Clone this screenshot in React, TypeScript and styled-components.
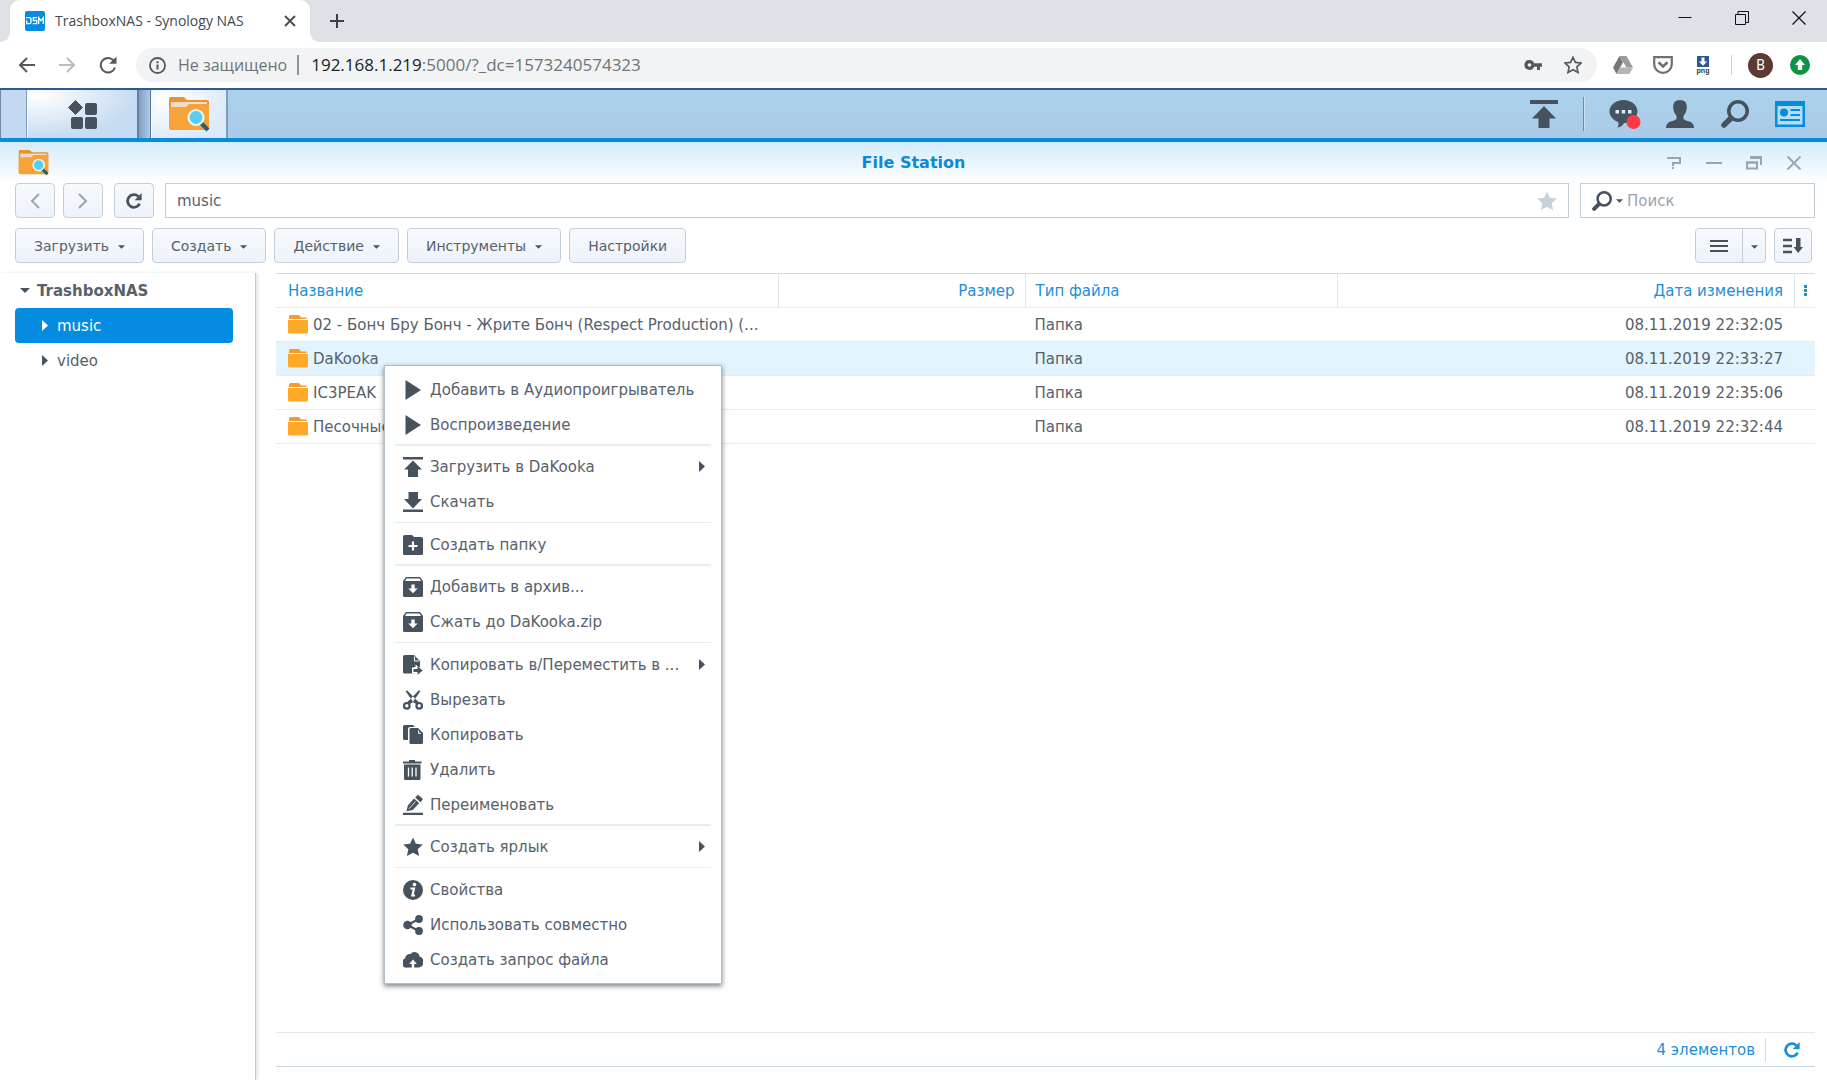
import React from "react";
import styled, { createGlobalStyle, css } from "styled-components";

const GlobalStyle = createGlobalStyle`
  *, *::before, *::after { box-sizing: border-box; }
  html, body, #root { height: 100%; margin: 0; }
  body { background: #fff; font: 15px/20px "DejaVu Sans", sans-serif; color: #57616b; overflow: hidden; }
  button, input { font: inherit; color: inherit; margin: 0; }
  button { padding: 0; border: 0; background: none; display: flex; align-items: center; justify-content: center; cursor: default; }
  svg { display: block; flex: none; }
  ul { margin: 0; padding: 0; list-style: none; }
`;

const ink = "#46535e";
const blue = "#058be0";
const azure = "#1c8fd8";
const grey = "#9aa5ae";

const Page = styled.div`
  display: flex;
  flex-direction: column;
  height: 100%;
`;

/* ---------- browser chrome ---------- */
const TabStrip = styled.header`
  display: flex;
  align-items: stretch;
  height: 42px;
  flex: none;
  padding-left: 10px;
  background: #dee1e6;
  font: 14px/20px "Open Sans", sans-serif;
  color: #45494d;
`;
const Tab = styled.div`
  position: relative;
  display: flex;
  align-items: center;
  gap: 10px;
  width: 300px;
  padding: 0 13px 0 15px;
  border-radius: 10px 10px 0 0;
  background: #fff;
  &::before, &::after {
    content: "";
    position: absolute;
    bottom: 0;
    width: 10px;
    height: 10px;
  }
  &::before { left: -10px; background: radial-gradient(circle at 0 0, transparent 10px, #fff 10px); }
  &::after { right: -10px; background: radial-gradient(circle at 100% 0, transparent 10px, #fff 10px); }
`;
const TabTitle = styled.span`
  flex: 1;
  white-space: nowrap;
`;
const IconButton = styled.button<{ $w?: number }>`
  width: ${(p) => (p.$w ? `${p.$w}px` : "auto")};
  flex: none;
`;
const WindowControls = styled.div`
  display: flex;
  margin-left: auto;
  height: 36px;
`;
const AddressRow = styled.div`
  display: flex;
  align-items: center;
  height: 46px;
  flex: none;
  padding: 0 17px 0 7px;
  background: #fff;
  font: 16px/22px "Open Sans", sans-serif;
`;
const AddressBar = styled.form`
  flex: 1;
  display: flex;
  align-items: center;
  height: 34px;
  margin-left: 8px;
  padding: 0 4px 0 13px;
  border-radius: 17px;
  background: #f1f3f4;
  color: #6f7378;
`;
const Security = styled.span`
  margin-left: 12px;
  padding-right: 10px;
  border-right: 2px solid #8f9499;
  line-height: 20px;
`;
const Url = styled.p`
  flex: 1;
  margin: 0 0 0 12px;
  font-size: 17px;
  b { font-weight: 400; color: #202124; }
`;
const Extensions = styled.div`
  display: flex;
  align-items: center;
  margin-left: 6px;
`;
const Avatar = styled.button`
  width: 25px;
  height: 25px;
  margin: 0 17px 0 16px;
  border-radius: 50%;
  background: #5b3a34;
  color: #fff;
  font: 14px/25px Roboto, sans-serif;
`;
const ThinRule = styled.i`
  width: 1px;
  height: 20px;
  margin-left: 8px;
  background: #cfd2d6;
`;

/* ---------- desktop taskbar ---------- */
const Taskbar = styled.nav`
  display: flex;
  height: 54px;
  flex: none;
  border-top: 2px solid #2f5b8c;
  border-bottom: 4px solid ${blue};
  background: linear-gradient(#abd1ec, #aacbe8);
`;
const TaskEdge = styled.i`
  width: 27px;
  border-left: 1px solid #6f8ba8;
  border-right: 1px solid #7f9dbb;
  background: #c4d9ef;
`;
const TaskButton = styled.button<{ $w: number; $light?: boolean }>`
  width: ${(p) => p.$w}px;
  border-left: 1px solid #f2f7fc;
  border-right: 2px solid ${(p) => (p.$light ? "#7f9dbb" : "#65809c")};
  background: ${(p) =>
    p.$light
      ? "radial-gradient(ellipse at 20% 20%, #fff, #dceafa 75%)"
      : "radial-gradient(ellipse at 8% 10%, #fff, #c6dcf2 70%)"};
`;
const TaskShade = styled.i`
  width: 12px;
  border-right: 1px solid #5f7b98;
  background: linear-gradient(90deg, #7f9fc0, #aecbe8);
`;
const Tray = styled.div`
  display: flex;
  align-items: center;
  margin-left: auto;
  padding-right: 3px;
`;
const TraySplit = styled.i`
  width: 2px;
  height: 34px;
  margin: 0 19px 0 20px;
  border-left: 1px solid #6b8cad;
  border-right: 1px solid #cbe1f4;
`;

/* ---------- File Station window ---------- */
const WindowBar = styled.header`
  display: grid;
  grid-template-columns: 1fr auto 1fr;
  align-items: center;
  height: 41px;
  flex: none;
  padding: 0 13px;
  background: linear-gradient(#d3ecfb, #fff);
  > svg { margin-left: 5px; }
  h1 { margin: 0; font-size: 16px; font-weight: 700; line-height: 20px; color: #0f88d6; }
`;
const WindowActions = styled.div`
  display: flex;
  justify-content: flex-end;
`;
const Toolbar = styled.div<{ $gap: number; $right: number }>`
  display: flex;
  gap: ${(p) => p.$gap}px;
  height: 35px;
  flex: none;
  margin: 0 ${(p) => p.$right}px 10px 15px;
`;
const History = styled.div`
  display: flex;
  gap: 8px;
`;
const face = css`
  border: 1px solid #c3ced9;
  border-radius: 4px;
  background: linear-gradient(#f7fafe, #edf3fb);
`;
const ToolButton = styled.button<{ $w?: number }>`
  ${face}
  ${(p) => (p.$w ? `width: ${p.$w}px;` : "padding: 0 18px;")}
  gap: 9px;
  flex: none;
  font-size: 14px;
  white-space: nowrap;
`;
const Field = styled.label<{ $w?: number }>`
  display: flex;
  align-items: center;
  gap: 4px;
  ${(p) => (p.$w ? `width: ${p.$w}px;` : "flex: 1;")}
  min-width: 0;
  padding: 0 11px;
  border: 1px solid #c3ced9;
  background: #fff;
  input {
    flex: 1;
    min-width: 0;
    padding: 0;
    border: 0;
    outline: 0;
    background: none;
  }
  input::placeholder { color: #98a3ad; opacity: 1; }
`;
const Segmented = styled.div`
  ${face}
  display: flex;
  margin-left: auto;
  button + button { border-left: 1px solid #c3ced9; }
`;
const Body = styled.main`
  display: flex;
  flex: 1;
  min-height: 0;
`;
const Sidebar = styled.aside`
  width: 256px;
  flex: none;
  padding: 0 22px 0 15px;
  border-right: 1px solid #c4cbd1;
  box-shadow: 2px 0 3px #e4e7ea;
`;
const TreeNode = styled.button<{ $root?: boolean; $active?: boolean }>`
  width: 100%;
  height: 35px;
  justify-content: flex-start;
  gap: ${(p) => (p.$root ? 7 : 9)}px;
  padding-left: ${(p) => (p.$root ? 5 : 27)}px;
  border-radius: 4px;
  font-weight: ${(p) => (p.$root ? 700 : 400)};
  background: ${(p) => (p.$active ? blue : "none")};
  color: ${(p) => (p.$active ? "#fff" : "inherit")};
`;
const Content = styled.section`
  display: flex;
  flex-direction: column;
  flex: 1;
  min-width: 0;
  margin: 0 12px 13px 20px;
`;
const Files = styled.table`
  width: 100%;
  table-layout: fixed;
  border-collapse: separate;
  border-spacing: 0;
  border-top: 1px solid #c9dcea;
  th, td {
    height: 34px;
    padding: 0 10px;
    border-bottom: 1px solid #e6ebef;
    overflow: hidden;
    white-space: nowrap;
    text-overflow: ellipsis;
    text-align: left;
    font-weight: 400;
  }
  th { color: ${azure}; }
  th:first-child, td:first-child { padding-left: 12px; }
  th + th { border-left: 1px solid #dce6ee; }
  th:nth-child(2), th:nth-child(4), td:nth-child(4) { text-align: right; }
  th:nth-child(4), td:nth-child(4) { padding-right: 11px; }
  th:last-child { padding: 0; }
`;
const Column = styled.col<{ $w?: string }>`
  width: ${(p) => p.$w ?? "auto"};
`;
const Row = styled.tr<{ $selected?: boolean }>`
  background: ${(p) => (p.$selected ? "#e2f4fe" : "#fff")};
`;
const FileName = styled.span`
  display: flex;
  align-items: center;
  gap: 5px;
`;
const StatusBar = styled.footer`
  display: flex;
  align-items: center;
  justify-content: flex-end;
  height: 35px;
  margin-top: auto;
  padding-right: 15px;
  border-top: 1px solid #e2e7eb;
  border-bottom: 1px solid #c9d6df;
  color: ${azure};
  i { width: 1px; height: 24px; margin: 0 18px 0 10px; background: #d3dce3; }
`;

/* ---------- context menu ---------- */
const Menu = styled.ul`
  position: absolute;
  left: 384px;
  top: 365px;
  width: 338px;
  padding: 6px 10px;
  border: 1px solid #b3bec6;
  background: #fff;
  box-shadow: 0 2px 5px rgba(40, 55, 70, 0.65);
`;
const MenuItem = styled.button`
  width: 100%;
  height: 35px;
  justify-content: flex-start;
  gap: 7px;
  padding: 0 6px 0 8px;
  span { flex: 1; text-align: left; white-space: nowrap; }
`;
const Divider = styled.li<{ $thick?: boolean }>`
  height: ${(p) => (p.$thick ? 2 : 1)}px;
  margin: ${(p) => (p.$thick ? "2px 0 3px" : "3px 0 4px")};
  background: #e6edf1;
`;

/* ---------- drawings ---------- */
const CaretSvg = styled.svg<{ $low?: boolean }>`
  margin-top: ${(p) => (p.$low ? 3 : 0)}px;
`;
const Caret = ({ w = 7, low = false }: { w?: number; low?: boolean }) => (
  <CaretSvg $low={low} width={w} height={Math.ceil(w / 2)} viewBox="0 0 8 4"><path d="M0 0h8L4 4z" fill={ink} /></CaretSvg>
);
const Arrow = ({ c = ink }: { c?: string }) => (
  <svg width="6" height="11" viewBox="0 0 6 11"><path d="M0 0l6 5.500L0 11z" fill={c} /></svg>
);
const Reload = ({ c = ink }: { c?: string }) => (
  <svg width="16" height="16" viewBox="0 0 16 16">
    <path d="M13.600 10.600A6.300 6.300 0 1 1 12.400 3.600" fill="none" stroke={c} strokeWidth="2.800" />
    <path d="M15.600 0v7.200H8.600z" fill={c} />
  </svg>
);
const Magnifier = ({ s }: { s: number }) => (
  <svg width={s} height={s} viewBox="0 0 28 28">
    <circle cx="17" cy="11" r="9.200" fill="none" stroke={ink} strokeWidth="3.600" />
    <path d="M9.600 18.600l-6.600 6.400" stroke={ink} strokeWidth="5.600" strokeLinecap="round" />
  </svg>
);
const StationIcon = ({ w }: { w: number }) => (
  <svg width={w} height={Math.round(w * 0.86)} viewBox="0 0 42 36">
    <path d="M1 3q0-2 2-2h13l3 3h20q2 0 2 2v25H1z" fill="#e8942a" />
    <path d="M3 6h36v6H3z" fill="#f6dcc3" />
    <path d="M1 11h17l3-3h20v24q0 2-2 2H3q-2 0-2-2z" fill="#f5a33a" />
    <path d="M33 27l7 7" stroke="#2d5c62" strokeWidth="4" />
    <circle cx="28" cy="21.500" r="7.500" fill="#57cdf5" stroke="#e9f4ee" strokeWidth="2.200" />
  </svg>
);
const FolderIcon = () => (
  <svg width="20" height="19" viewBox="0 0 20 19">
    <path d="M1 1.500Q1 0 2.500 0H11l2 2.500h5.500V4H1z" fill="#f59a2b" />
    <path d="M0 5h20v12q0 1.500-1.500 1.500h-17Q0 18.500 0 17z" fill="#ffa928" />
  </svg>
);
const starPath = "M10 .5l2.900 6.300 6.900.8-5.100 4.700 1.400 6.800-6.100-3.400-6.100 3.400 1.400-6.800L.2 7.600l6.900-.8z";

const glyphs: Record<string, React.ReactNode> = {
  play: <path d="M2.500 0l15.500 10L2.500 20z" />,
  upload: <path d="M0 0h20v2.500H0zM10 3.500l9 9h-4V20H5v-7.500H1z" />,
  download: <path d="M0 17.500h20V20H0zM5.500 0h9.500v7H19l-9 9.500L1 7h4.500z" />,
  newFolder: (
    <>
      <path d="M0 1.500Q0 0 1.500 0H9l2 2h7.500Q20 2 20 3.500v15q0 1.500-1.500 1.500h-17Q0 20 0 18.500z" />
      <path d="M10 6.500v9M5.500 11h9" stroke="#fff" strokeWidth="2.200" />
    </>
  ),
  archive: (
    <>
      <path d="M3 0h14l3 4v14.500q0 1.500-1.500 1.500h-17Q0 20 0 18.500V4z" />
      <path d="M3.500 1.500h13l1.500 2.500H2z" fill="#fff" />
      <path d="M8.300 7.500h3.400v4h3L10 16.300l-4.700-4.800h3z" fill="#fff" />
    </>
  ),
  move: (
    <>
      <path d="M0 1.500Q0 0 1.500 0H11l6 6v6h-6v6.500H1.500Q0 18.500 0 17z" />
      <path d="M11.500 1.500v4.500H16" fill="none" stroke="#fff" />
      <path d="M12.500 9.500V12.500H9v6h3.500V20h3l4.500-4.500z" fill="#fff" />
      <path d="M10.500 14h4v-2.800l5.300 4.300-5.300 4.300V17h-4z" />
    </>
  ),
  cut: (
    <>
      <g fill="none" stroke={ink} strokeWidth="2.200">
        <circle cx="3.800" cy="15.800" r="2.800" />
        <circle cx="16.200" cy="15.800" r="2.800" />
      </g>
      <path d="M2.500 1Q4-.3 5 1.200L16.500 13l-2 1.800-4-2.300zM17.500 1Q16-.3 15 1.200L3.500 13l2 1.800 4-2.300z" />
    </>
  ),
  copy: (
    <>
      <path d="M0 1.500Q0 0 1.500 0H10l2 2H7Q5 2 5 4v11H1.500Q0 15 0 13.500z" />
      <path d="M6.500 4.500Q6.500 3 8 3h7l5 5v9.500q0 1.500-1.500 1.500H8q-1.500 0-1.500-1.500z" />
      <path d="M15.500 5.500v2.800H18" fill="none" stroke="#fff" />
    </>
  ),
  trash: (
    <>
      <path d="M6 0h6v1.500h6.500v2H0v-2h6zM1 4.500h16.500V18.500Q17.500 20 16 20H2.500Q1 20 1 18.500z" />
      <path d="M5.500 7.500v9M9.200 7.500v9M13 7.500v9" stroke="#fff" strokeWidth="1.300" />
    </>
  ),
  rename: (
    <>
      <path d="M0 17.800h20V20H0zM3.500 16.300l1.300-5.800L11 3.500l5.200 4.500-6.400 7zM12.200 2.500L14 .5q1-.8 2 0l3.200 2.800q.9 1 0 2l-1.800 2z" />
      <path d="M6 13.800L12.500 6.500" stroke="#fff" strokeWidth=".8" />
    </>
  ),
  star: <path d={starPath} />,
  info: (
    <>
      <circle cx="10" cy="10" r="10" />
      <circle cx="11.500" cy="4.600" r="1.800" fill="#fff" />
      <path d="M7.500 8.500h3.500l-1.600 7h2.600" fill="none" stroke="#fff" strokeWidth="2.200" />
    </>
  ),
  share: (
    <>
      <path d="M16 4L4.500 10 16 16" fill="none" stroke={ink} strokeWidth="2.200" />
      <circle cx="4.500" cy="10" r="4.300" /><circle cx="16" cy="4" r="3.900" /><circle cx="16" cy="16" r="3.900" />
    </>
  ),
  cloud: (
    <>
      <path d="M4.500 17.500A4.500 4.500 0 0 1 2 8.500 5 5 0 0 1 7.500 4a5 5 0 0 1 9 2.600 5.600 5.600 0 0 1-.5 10.900z" />
      <path d="M8.800 18v-4H6.200L10 9.500l3.800 4.500h-2.600v4z" fill="#fff" />
    </>
  ),
};
const Glyph = ({ name }: { name: string }) => (
  <svg width="20" height="20" viewBox="0 0 20 20" fill={ink}>{glyphs[name]}</svg>
);

type Entry = { icon: string; text: string; sub?: boolean };
const menuGroups: Entry[][] = [
  [{ icon: "play", text: "Добавить в Аудиопроигрыватель" }, { icon: "play", text: "Воспроизведение" }],
  [{ icon: "upload", text: "Загрузить в DaKooka", sub: true }, { icon: "download", text: "Скачать" }],
  [{ icon: "newFolder", text: "Создать папку" }],
  [{ icon: "archive", text: "Добавить в архив..." }, { icon: "archive", text: "Сжать до DaKooka.zip" }],
  [
    { icon: "move", text: "Копировать в/Переместить в ...", sub: true },
    { icon: "cut", text: "Вырезать" },
    { icon: "copy", text: "Копировать" },
    { icon: "trash", text: "Удалить" },
    { icon: "rename", text: "Переименовать" },
  ],
  [{ icon: "star", text: "Создать ярлык", sub: true }],
  [
    { icon: "info", text: "Свойства" },
    { icon: "share", text: "Использовать совместно" },
    { icon: "cloud", text: "Создать запрос файла" },
  ],
];
const files = [
  ["02 - Бонч Бру Бонч - Жрите Бонч (Respect Production) (...", "08.11.2019 22:32:05"],
  ["DaKooka", "08.11.2019 22:33:27"],
  ["IC3PEAK", "08.11.2019 22:35:06"],
  ["Песочные", "08.11.2019 22:32:44"],
];

function BrowserChrome() {
  return (
    <>
      <TabStrip>
        <Tab>
          <svg width="20" height="20" viewBox="0 0 20 20">
            <rect width="20" height="20" rx="2" fill={blue} />
            <g fill="none" stroke="#fff" strokeWidth="1.300">
              <path d="M1 6.700h3.500q1.500 0 1.500 1.500v3q0 1.500-1.500 1.500H1.700V9.500" />
              <path d="M12 6.700H8.300v2.800h3.500v3.200H7.800" />
              <path d="M13.700 13V6.700l2.300 3 2.300-3V13" />
            </g>
          </svg>
          <TabTitle>TrashboxNAS - Synology NAS</TabTitle>
          <IconButton aria-label="Закрыть вкладку">
            <svg width="14" height="14" viewBox="0 0 14 14"><path d="M2 2l10 10M12 2L2 12" stroke="#45494d" strokeWidth="1.800" /></svg>
          </IconButton>
        </Tab>
        <IconButton $w={54} aria-label="Новая вкладка">
          <svg width="16" height="16" viewBox="0 0 16 16"><path d="M8 1v14M1 8h14" stroke="#3c4043" strokeWidth="2" /></svg>
        </IconButton>
        <WindowControls>
          <IconButton $w={57} aria-label="Свернуть">
            <svg width="14" height="14" viewBox="0 0 14 14"><path d="M.5 6.500h13" stroke="#111" /></svg>
          </IconButton>
          <IconButton $w={57} aria-label="Развернуть">
            <svg width="14" height="14" viewBox="0 0 14 14" fill="none" stroke="#111"><path d="M.5 3.500h10v10H.5zM3 3V.5h10.500v11H11" /></svg>
          </IconButton>
          <IconButton $w={57} aria-label="Закрыть">
            <svg width="14" height="14" viewBox="0 0 14 14"><path d="M.5 .5l13 13M13.500 .5l-13 13" stroke="#111" strokeWidth="1.200" /></svg>
          </IconButton>
        </WindowControls>
      </TabStrip>
      <AddressRow>
        <IconButton $w={40} aria-label="Назад">
          <svg width="18" height="18" viewBox="0 0 18 18" fill="none" stroke="#55595e" strokeWidth="2"><path d="M17 9H2.500M9 2L2 9l7 7" /></svg>
        </IconButton>
        <IconButton $w={40} aria-label="Вперёд">
          <svg width="18" height="18" viewBox="0 0 18 18" fill="none" stroke="#b9bcc0" strokeWidth="2"><path d="M1 9h14.500M9 2l7 7-7 7" /></svg>
        </IconButton>
        <IconButton $w={41} aria-label="Обновить страницу">
          <svg width="18" height="18" viewBox="0 0 18 18"><path d="M16 11.500A7.300 7.300 0 1 1 14.500 4.300" fill="none" stroke="#55595e" strokeWidth="2" /><path d="M17.500 .5v7.300h-7.300z" fill="#55595e" /></svg>
        </IconButton>
        <AddressBar>
          <svg width="17" height="17" viewBox="0 0 17 17"><circle cx="8.500" cy="8.500" r="7.500" fill="none" stroke="#55595e" strokeWidth="1.800" /><path d="M8.500 7.500v5M8.500 4.300v2" stroke="#55595e" strokeWidth="2" /></svg>
          <Security>Не защищено</Security>
          <Url><b>192.168.1.219</b>:5000/?_dc=1573240574323</Url>
          <IconButton type="button" $w={40} aria-label="Пароли">
            <svg width="18" height="12" viewBox="0 0 18 12"><path d="M5.500 1a5 5 0 1 0 4.600 6.800H13V11h3V7.800h2V4.200h-7.900A5 5 0 0 0 5.500 1zm0 3.200a1.800 1.800 0 1 1 0 3.600 1.800 1.800 0 0 1 0-3.600z" fill="#55595e" /></svg>
          </IconButton>
          <IconButton type="button" $w={40} aria-label="Добавить в закладки">
            <svg width="18" height="18" viewBox="-1 -1 22 22"><path d={starPath} fill="none" stroke="#55595e" strokeWidth="2" /></svg>
          </IconButton>
        </AddressBar>
        <Extensions>
          <IconButton $w={40} aria-label="Google Drive">
            <svg width="20" height="18" viewBox="0 0 20 18"><path d="M6.500 0h7L20 11.500h-6.500z" fill="#9b9b9b" /><path d="M6.500 0L0 11.500 3.500 18 10 6.200z" fill="#777" /><path d="M6.800 11.500H20L16.500 18h-13z" fill="#b6b6b6" /></svg>
          </IconButton>
          <IconButton $w={40} aria-label="Pocket">
            <svg width="20" height="18" viewBox="0 0 20 18" fill="none" stroke="#707070"><path d="M1.200 1.200h17.600V8a8.800 8.800 0 0 1-17.600 0z" strokeWidth="2.200" /><path d="M5.500 6.200L10 10.500l4.500-4.300" strokeWidth="2.600" /></svg>
          </IconButton>
          <IconButton $w={40} aria-label="Скачать png">
            <svg width="14" height="19" viewBox="0 0 14 19"><rect x="1" width="12" height="11" fill="#2f5596" /><path d="M5.500 1.500h3v4h2.700L7 9.700 2.800 5.500h2.700z" fill="#fff" /><text x="7" y="16.500" textAnchor="middle" fontFamily="Liberation Sans, sans-serif" fontSize="7" fontWeight="700" fill="#333">png</text></svg>
          </IconButton>
          <ThinRule />
          <Avatar>B</Avatar>
          <IconButton $w={20} aria-label="Обновить браузер">
            <svg width="20" height="20" viewBox="0 0 20 20"><circle cx="10" cy="10" r="10" fill="#0b9444" /><path d="M10 4l5 6h-2.800v5H7.800v-5H5z" fill="#fff" /></svg>
          </IconButton>
        </Extensions>
      </AddressRow>
    </>
  );
}

function DesktopTaskbar() {
  return (
    <Taskbar>
      <TaskEdge />
      <TaskButton $w={112} aria-label="Главное меню">
        <svg width="30" height="30" viewBox="0 0 30 30" fill={ink}>
          <path d="M7.500 1.500l7 7-7 7-7-7z" stroke={ink} strokeLinejoin="round" />
          <rect x="17" y="4" width="12" height="12" rx="2" /><rect x="3" y="18" width="12" height="12" rx="2" /><rect x="17" y="18" width="12" height="12" rx="2" />
        </svg>
      </TaskButton>
      <TaskShade />
      <TaskButton $w={77} $light aria-label="File Station"><StationIcon w={42} /></TaskButton>
      <Tray>
        <IconButton $w={38} aria-label="Загрузка">
          <svg width="28" height="28" viewBox="0 0 28 28" fill={ink}><path d="M0 0h28v4H0zM14 6l12 12.500h-6.500V28h-11v-9.500H2z" /></svg>
        </IconButton>
        <TraySplit />
        <IconButton $w={42} aria-label="Уведомления">
          <svg width="32" height="30" viewBox="0 0 32 30">
            <path d="M14.500 1C22 1 28.500 6 28.500 12.500S22 24 15 24q-2 4-6.500 4.500 1.500-2.500.8-5.500C4 21 .5 17 .5 12.500.5 6 7 1 14.500 1z" fill={ink} />
            <path d="M6.500 11h3.500v3.500H6.500zM12.700 11h3.500v3.500h-3.500zM19 11h3.500v3.500H19z" fill="#dcebf8" />
            <circle cx="24.500" cy="23" r="7" fill="#fb3a46" />
          </svg>
        </IconButton>
        <IconButton $w={68} aria-label="Параметры">
          <svg width="28" height="28" viewBox="0 0 28 28" fill={ink}><path d="M14 0c5 0 7 3 6.800 7.500L20 12l-2.500 4v3q2 1.500 6 2.500 4.500 1.500 4.500 6.500H0q0-5 4.500-6.500 4-1 6-2.500v-3L8 12l-.8-4.500C7 3 9 0 14 0z" /></svg>
        </IconButton>
        <IconButton $w={42} aria-label="Поиск"><Magnifier s={28} /></IconButton>
        <IconButton $w={68} aria-label="Виджеты">
          <svg width="30" height="26" viewBox="0 0 30 26">
            <path d="M0 0h30v26H0z" fill={blue} /><path d="M2.500 5h25v18.500h-25z" fill="#b9dcf5" />
            <circle cx="9" cy="11.500" r="4" fill={blue} /><path d="M15.500 9h9.500M15.500 14h9.500M5 19h20" stroke={blue} strokeWidth="2.200" />
          </svg>
        </IconButton>
      </Tray>
    </Taskbar>
  );
}

function ContextMenu() {
  return (
    <Menu role="menu">
      {menuGroups.map((group, g) => (
        <React.Fragment key={g}>
          {g > 0 && <Divider role="separator" $thick={g % 2 === 1} />}
          {group.map((e) => (
            <li key={e.text} role="none">
              <MenuItem role="menuitem">
                <Glyph name={e.icon} />
                <span>{e.text}</span>
                {e.sub && <Arrow />}
              </MenuItem>
            </li>
          ))}
        </React.Fragment>
      ))}
    </Menu>
  );
}

export default function App() {
  return (
    <Page>
      <GlobalStyle />
      <BrowserChrome />
      <DesktopTaskbar />
      <WindowBar>
        <StationIcon w={31} />
        <h1>File Station</h1>
        <WindowActions>
          <IconButton $w={40} aria-label="Справка">
            <svg width="14" height="14" viewBox="0 0 14 14" fill="none" stroke={grey} strokeWidth="2"><path d="M0 2h13v5H6v3M6 11v2" /></svg>
          </IconButton>
          <IconButton $w={40} aria-label="Свернуть окно">
            <svg width="16" height="14" viewBox="0 0 16 14"><path d="M0 7h16" stroke={grey} strokeWidth="2" /></svg>
          </IconButton>
          <IconButton $w={40} aria-label="Восстановить окно">
            <svg width="16" height="14" viewBox="0 0 16 14" fill="none" stroke={grey}><path d="M1 6.500h10V12.500H1z" strokeWidth="2" /><path d="M4 1.500h12" strokeWidth="3" /><path d="M15 1v8M0 6.500h12" strokeWidth="2" /></svg>
          </IconButton>
          <IconButton $w={40} aria-label="Закрыть окно">
            <svg width="16" height="14" viewBox="0 0 16 14"><path d="M1.500 .5l13 13M14.500 .5l-13 13" stroke={grey} strokeWidth="2" /></svg>
          </IconButton>
        </WindowActions>
      </WindowBar>
      <Toolbar $gap={11} $right={12}>
        <History>
          <ToolButton $w={40} aria-label="Назад">
            <svg width="10" height="16" viewBox="0 0 10 16"><path d="M9 1L2 8l7 7" fill="none" stroke={grey} strokeWidth="2" /></svg>
          </ToolButton>
          <ToolButton $w={40} aria-label="Вперёд">
            <svg width="10" height="16" viewBox="0 0 10 16"><path d="M1 1l7 7-7 7" fill="none" stroke={grey} strokeWidth="2" /></svg>
          </ToolButton>
        </History>
        <ToolButton $w={40} aria-label="Обновить"><Reload /></ToolButton>
        <Field>
          <input aria-label="Путь" defaultValue="music" />
          <svg width="20" height="20" viewBox="0 0 20 20"><path d={starPath} fill="#c5d2de" /></svg>
        </Field>
        <Field $w={235}>
          <Magnifier s={20} />
          <Caret />
          <input aria-label="Поиск" placeholder="Поиск" />
        </Field>
      </Toolbar>
      <Toolbar $gap={8} $right={15}>
        {["Загрузить", "Создать", "Действие", "Инструменты"].map((t) => (
          <ToolButton key={t}>{t}<Caret low /></ToolButton>
        ))}
        <ToolButton>Настройки</ToolButton>
        <Segmented>
          <IconButton $w={46} aria-label="Вид списком">
            <svg width="18" height="14" viewBox="0 0 18 14"><path d="M0 2h18M0 7h18M0 12h18" stroke={ink} strokeWidth="2" /></svg>
          </IconButton>
          <IconButton $w={23} aria-label="Выбрать вид"><Caret low /></IconButton>
        </Segmented>
        <ToolButton $w={38} aria-label="Сортировка">
          <svg width="20" height="18" viewBox="0 0 20 18"><path d="M0 3h9M0 9h9M0 15h9" stroke={ink} strokeWidth="2.400" /><path d="M13 1h4.500v9H20l-4.800 6L10.500 10H13z" fill={ink} /></svg>
        </ToolButton>
      </Toolbar>
      <Body>
        <Sidebar>
          <TreeNode $root><Caret w={10} />TrashboxNAS</TreeNode>
          <TreeNode $active><Arrow c="#fff" />music</TreeNode>
          <TreeNode><Arrow />video</TreeNode>
        </Sidebar>
        <Content>
          <Files>
            <colgroup>
              <Column /><Column $w="16%" /><Column $w="20.3%" /><Column $w="29.7%" /><Column $w="21px" />
            </colgroup>
            <thead>
              <tr>
                <th>Название</th><th>Размер</th><th>Тип файла</th><th>Дата изменения</th>
                <th>
                  <IconButton $w={20} aria-label="Столбцы">
                    <svg width="3" height="11" viewBox="0 0 3 11" fill={azure}><path d="M0 0h3v3H0zM0 4h3v3H0zM0 8h3v3H0z" /></svg>
                  </IconButton>
                </th>
              </tr>
            </thead>
            <tbody>
              {files.map(([name, date], i) => (
                <Row key={name} $selected={i === 1}>
                  <td><FileName><FolderIcon /><span>{name}</span></FileName></td>
                  <td /><td>Папка</td><td>{date}</td><td />
                </Row>
              ))}
            </tbody>
          </Files>
          <StatusBar>
            <span>4 элементов</span>
            <i />
            <IconButton aria-label="Обновить список"><Reload c={azure} /></IconButton>
          </StatusBar>
        </Content>
      </Body>
      <ContextMenu />
    </Page>
  );
}
